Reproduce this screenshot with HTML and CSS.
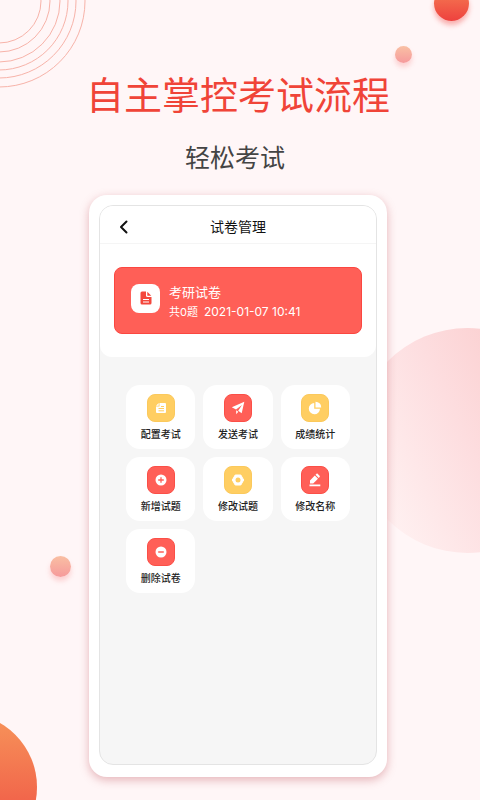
FILE: index.html
```html
<!DOCTYPE html>
<html lang="zh-CN">

<head>
    <meta charset="UTF-8">
    <meta name="viewport" content="width=device-width, initial-scale=1.0">
    <title>试卷管理</title>
    <link rel="stylesheet" href="styles.css">
</head>

<body>
    <div class="page">
        <!-- background shapes -->
        <svg class="rings" width="90" height="90" viewBox="0 0 90 90" fill="none" stroke="#f7b3a9">
            <circle cx="-1" cy="1" r="42" />
            <circle cx="-1" cy="1" r="51" />
            <circle cx="-1" cy="1" r="61" />
            <circle cx="-1" cy="1" r="69" />
            <circle cx="-1" cy="1" r="77" />
            <circle cx="-1" cy="1" r="86" />
        </svg>
        <div class="ball ball-top"></div>
        <div class="ball ball-small"></div>
        <div class="ball ball-left"></div>
        <div class="ball ball-corner"></div>
        <div class="ball ball-large"></div>

        <h1 class="title">自主掌控考试流程</h1>
        <p class="subtitle">轻松考试</p>

        <div class="phone">
            <div class="screen">
                <div class="top">
                    <div class="nav">
                        <button class="back" type="button" aria-label="返回">
                            <svg width="10" height="14" viewBox="0 0 10 14" fill="none" stroke="#111" stroke-width="2" stroke-linecap="round" stroke-linejoin="round">
                                <path d="M7.500 1.500 2 7l5.500 5.500" />
                            </svg>
                        </button>
                        <h2>试卷管理</h2>
                    </div>
                    <div class="card">
                        <div class="card-icon">
                            <svg width="12" height="14" viewBox="0 0 12 14">
                                <path fill="#f4473c" d="M2 .5h4v4.300c0 .7.5 1.200 1.200 1.200H11.500v6a1.500 1.500 0 0 1-1.500 1.500H2A1.500 1.500 0 0 1 .5 12V2A1.500 1.500 0 0 1 2 .5zM7.300.7l4 4h-4z" />
                                <path stroke="#fff" d="M3 8.500h6M3 11h6" />
                            </svg>
                        </div>
                        <div>
                            <div class="card-name">考研试卷</div>
                            <div class="card-info"><span>共0题</span><span class="card-time">2021-01-07 10:41</span></div>
                        </div>
                    </div>
                </div>

                <div class="menu">
                    <button class="item" type="button">
                        <span class="icon yellow">
                            <svg width="12" height="12" viewBox="0 0 12 12">
                                <path fill="#fff" d="M4.500 1H10a1 1 0 0 1 1 1v8a1 1 0 0 1-1 1H2a1 1 0 0 1-1-1V4.500h3.500zM3.700 1v2.700H1z" />
                                <path stroke="#ffce62" d="M6 4.500h3M3.500 6.500H9M3.500 8.800H9" />
                            </svg>
                        </span>
                        配置考试
                    </button>
                    <button class="item" type="button">
                        <span class="icon">
                            <svg width="14" height="14" viewBox="0 0 14 14" fill="#fff">
                                <path d="M13.300.7 10.700 12.200 7.200 9.700 11 4 5 8.500.8 6.300z" />
                                <path d="M5.200 9.300 7.300 10.800 5.200 13.200z" />
                            </svg>
                        </span>
                        发送考试
                    </button>
                    <button class="item" type="button">
                        <span class="icon yellow">
                            <svg width="14" height="14" viewBox="0 0 14 14" fill="#fff">
                                <path d="M6.200 2v5.800H12A5.600 5.600 0 1 1 6.200 2z" />
                                <path d="M7.500.7a5.600 5.600 0 0 1 5.700 5.700H7.500z" />
                            </svg>
                        </span>
                        成绩统计
                    </button>
                    <button class="item" type="button">
                        <span class="icon">
                            <svg width="12" height="12" viewBox="0 0 12 12">
                                <circle cx="6" cy="6" r="5.500" fill="#fff" />
                                <path stroke="#ff5f57" stroke-width="1.300" d="M3.200 6h5.600M6 3.200v5.600" />
                            </svg>
                        </span>
                        新增试题
                    </button>
                    <button class="item" type="button">
                        <span class="icon yellow">
                            <svg width="14" height="14" viewBox="0 0 14 14">
                                <path fill="#fff" stroke="#fff" stroke-linejoin="round" d="M4.200 2h5.600l2.900 5-2.900 5H4.200L1.300 7z" />
                                <circle cx="7" cy="7" r="2.500" fill="#ffce62" />
                            </svg>
                        </span>
                        修改试题
                    </button>
                    <button class="item" type="button">
                        <span class="icon">
                            <svg width="14" height="14" viewBox="0 0 14 14" fill="#fff">
                                <path d="M1.500 11.500h10.800v1.800H1.500zM2 7.400l4.800-4.900 3.200 3.200-4.800 4.900H2zM7.500 1.800l.9-.9c.4-.4 1-.4 1.400 0l1.800 1.800c.4.400.4 1 0 1.400l-.9.900z" />
                            </svg>
                        </span>
                        修改名称
                    </button>
                    <button class="item" type="button">
                        <span class="icon">
                            <svg width="12" height="12" viewBox="0 0 12 12">
                                <circle cx="6" cy="6" r="5.500" fill="#fff" />
                                <path stroke="#ff5f57" stroke-width="1.300" d="M3.200 6h5.600" />
                            </svg>
                        </span>
                        删除试卷
                    </button>
                </div>
            </div>
        </div>
    </div>
</body>

</html>
```
FILE: styles.css
```css
* {
    margin: 0;
    padding: 0;
    box-sizing: border-box;
}

body {
    font-family: Inter, "Noto Sans CJK SC", sans-serif;
    background-color: #fff6f7;
}

button {
    border: none;
    font-family: inherit;
    cursor: pointer;
}

svg {
    display: block;
}

.page {
    position: relative;
    min-height: 100vh;
    padding: 67px 93px 23px 89px;
    overflow: hidden;
}

.rings {
    position: absolute;
    left: 0;
    top: 0;
}

.ball {
    position: absolute;
    border-radius: 50%;
}

.ball-top {
    width: 35px;
    height: 35px;
    right: 11px;
    top: -14px;
    background: linear-gradient(#f68255, #ee413e);
    box-shadow: 0 4px 5px rgba(240, 70, 65, 0.4);
}

.ball-small {
    width: 17px;
    height: 17px;
    right: 68px;
    top: 46px;
    background: linear-gradient(#f9c0a4, #f69a9c);
    box-shadow: 0 4px 5px rgba(246, 120, 120, 0.3);
}

.ball-left {
    width: 21px;
    height: 21px;
    left: 50px;
    top: 556px;
    background: linear-gradient(#f9bfa3, #f69a9b);
    box-shadow: 0 4px 5px rgba(246, 120, 120, 0.3);
}

.ball-corner {
    width: 148px;
    height: 148px;
    left: -111px;
    top: 713px;
    background: linear-gradient(#f7955a, #ee4540);
}

.ball-large {
    width: 225px;
    height: 225px;
    right: -100px;
    top: 328px;
    background: linear-gradient(245deg, #fac8c8 10%, #fddddf 50%, #fff3f3 90%);
}

.title {
    margin: 0 -20px;
    font-size: 38px;
    font-weight: 400;
    line-height: 56px;
    text-align: center;
    white-space: nowrap;
    color: #f04438;
}

.subtitle {
    margin: 16px 0 18px;
    padding-right: 6px;
    font-size: 25px;
    line-height: 38px;
    text-align: center;
    color: #444;
}

.phone {
    position: relative;
    padding: 10px 10px 12px;
    border-radius: 18px;
    background-color: #fff;
    box-shadow: 0 3px 10px rgba(190, 80, 90, 0.4);
}

.screen {
    min-height: 560px;
    border: 1px solid #e4e4e4;
    border-radius: 14px;
    background-color: #f6f6f6;
    overflow: hidden;
}

.top {
    padding-bottom: 23px;
    border-radius: 0 0 12px 12px;
    background-color: #fff;
}

.nav {
    display: grid;
    grid-template-columns: 33px 1fr 33px;
    align-items: center;
    height: 38px;
    padding-top: 4px;
    border-bottom: 1px solid #f5f5f5;
}

.nav h2 {
    font-size: 14px;
    font-weight: 400;
    line-height: 20px;
    text-align: center;
    color: #111;
}

.back {
    justify-self: end;
    padding: 4px;
    background: none;
}

.card {
    display: flex;
    align-items: center;
    gap: 9px;
    margin: 23px 14px 0;
    padding: 14px 16px 11px;
    border: 1px solid #fb4740;
    border-radius: 8px;
    background-color: #ff5f57;
    color: #fff;
}

.card-icon {
    display: flex;
    align-items: center;
    justify-content: center;
    width: 29px;
    height: 29px;
    margin-bottom: 8px;
    border-radius: 8px;
    background-color: #fff;
}

.card-name {
    font-size: 13px;
    line-height: 20px;
}

.card-info {
    display: flex;
    align-items: baseline;
    gap: 6px;
    font-size: 11px;
    line-height: 19px;
}

.card-time {
    font-size: 12px;
}

.menu {
    display: grid;
    grid-template-columns: repeat(3, 1fr);
    gap: 8px;
    padding: 28px 26px;
}

.item {
    display: flex;
    flex-direction: column;
    align-items: center;
    gap: 4px;
    padding: 9px 0 6px;
    border-radius: 14px;
    background-color: #fff;
    font-size: 10px;
    font-weight: 500;
    line-height: 17px;
    color: #222;
}

.icon {
    display: flex;
    align-items: center;
    justify-content: center;
    width: 28px;
    height: 28px;
    border: 1px solid #fb4f47;
    border-radius: 8px;
    background-color: #ff5f57;
}

.yellow {
    border-color: #fbc95c;
    background-color: #ffce62;
}
```
